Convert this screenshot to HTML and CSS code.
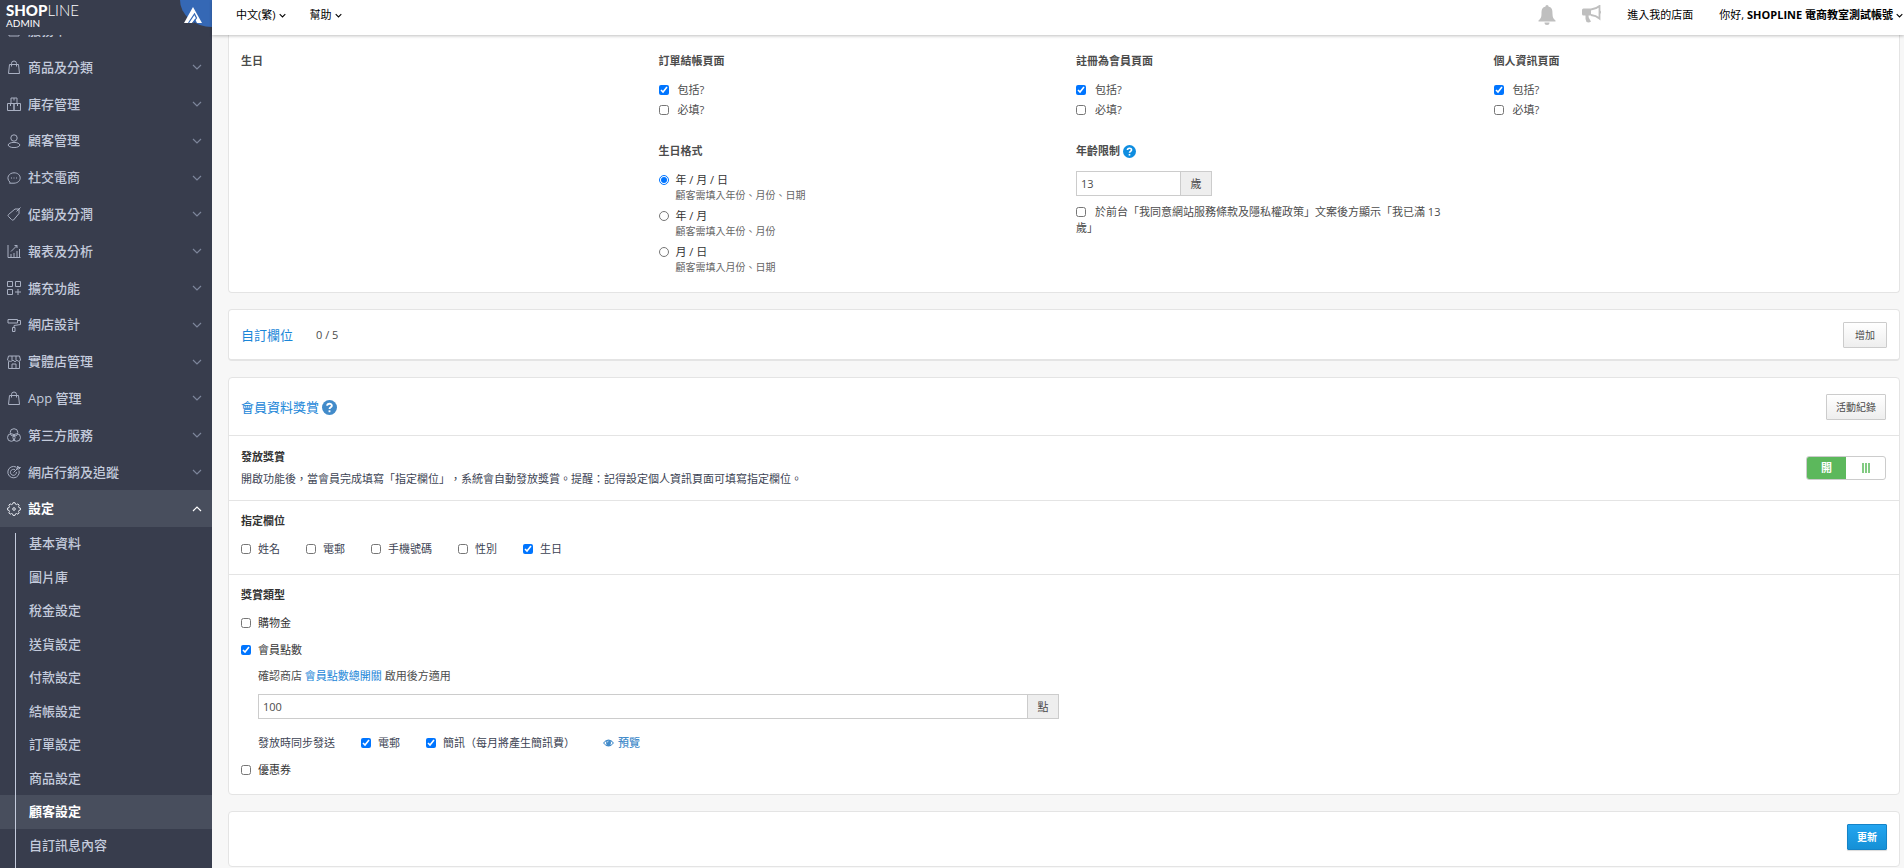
FILE: index.html
```html
<!DOCTYPE html>
<html lang="zh-Hant">
<head>
<meta charset="utf-8">
<title>SHOPLINE Admin</title>
<link rel="stylesheet" href="styles.css">
</head>
<body>
<svg class="sprite" aria-hidden="true">
  <symbol id="down" viewBox="0 0 10 6"><path d="M1 1l4 4 4-4"/></symbol>
  <symbol id="bag" viewBox="0 0 14 14"><path d="M2.500 4.500h9l1 9h-11zM4.500 6.500V3.500a2.500 2.500 0 0 1 5 0v3"/></symbol>
  <symbol id="help" viewBox="0 0 16 16"><circle cx="8" cy="8" r="8" fill="currentColor" stroke="none"/><path d="M5.500 6.200C5.500 3.200 10.500 3.200 10.500 6.100C10.500 7.800 8 7.800 8 9.600" stroke="#fff" stroke-width="2"/><path d="M8 11v2" stroke="#fff" stroke-width="2"/></symbol>
</svg>
<div class="app">
  <aside class="sidebar">
    <div class="brand">
      <a class="logo" href="#"><span class="logo-name"><b>SHOP</b>LINE</span><span class="logo-sub">ADMIN</span></a>
      <svg class="corner" viewBox="0 0 32 27"><path d="M0 0A32 27 0 0 0 32 27V0z" fill="#3568b5"/><path d="M4 23L13 7l9 16h-5l-2-4-3 4zM11.500 17.500l1.500-4" fill="#fff" stroke="none"/><path d="M8.500 23l6-9 2 4-3.500 5" fill="none" stroke="#3568b5" stroke-width="1.200"/></svg>
    </div>
    <nav class="nav">
      <ul class="menu">
        <li><a href="#"><svg class="ico" viewBox="0 0 14 14"><path d="M2 1h10v12H2z"/></svg>服務單</a></li>
        <li><a href="#"><svg class="ico"><use href="#bag"/></svg>商品及分類<svg class="chev"><use href="#down"/></svg></a></li>
        <li><a href="#"><svg class="ico" viewBox="0 0 14 14"><path d="M4 1h6v5.500H4zM.5 6.500H7v7H.5zM7 6.500h6.500v7H7zM7 1v2.500M3.500 6.500V9M10.500 6.500V9"/></svg>庫存管理<svg class="chev"><use href="#down"/></svg></a></li>
        <li><a href="#"><svg class="ico" viewBox="0 0 14 14"><circle cx="7" cy="4" r="3.200"/><ellipse cx="7" cy="11" rx="5.800" ry="2.600"/></svg>顧客管理<svg class="chev"><use href="#down"/></svg></a></li>
        <li><a href="#"><svg class="ico" viewBox="0 0 14 14"><path d="M3 11.200C-1.500 7 2 1.800 7 1.800c8 0 8.500 10 0 10.400H2.500zM4 7h1M6.500 7h1M9 7h1"/></svg>社交電商<svg class="chev"><use href="#down"/></svg></a></li>
        <li><a href="#"><svg class="ico" viewBox="0 0 14 14"><path d="M8 2h4v4.500L6.500 13Q5.500 13.500 4.500 12.500L1.500 9.500Q.5 8.500 1.500 7.500zM9.500 4.500l4-4"/></svg>促銷及分潤<svg class="chev"><use href="#down"/></svg></a></li>
        <li><a href="#"><svg class="ico" viewBox="0 0 14 14"><path d="M1 1v12.500h12.500M4 13v-3M7 13V9M10 13V7M12.500 13V5M4 7.500l6-6M7.500 1.500H10V4"/></svg>報表及分析<svg class="chev"><use href="#down"/></svg></a></li>
        <li><a href="#"><svg class="ico" viewBox="0 0 14 14"><path d="M.5.5h5v5h-5zM8.500.5h5v5h-5zM.5 8.500h5v5h-5zM11 8v6M8 11h6"/></svg>擴充功能<svg class="chev"><use href="#down"/></svg></a></li>
        <li><a href="#"><svg class="ico" viewBox="0 0 14 14"><path d="M1 1.500h9.500v3.500H1zM10.500 2.500h3v4L7 7.500v2M5.500 9.500h2.500v4H5.500z"/></svg>網店設計<svg class="chev"><use href="#down"/></svg></a></li>
        <li><a href="#"><svg class="ico" viewBox="0 0 14 14"><path d="M1.500 1h11l1 4c-1 2-3 1.500-3.500 0-1 2-3 2-4 0-.5 1.500-4.500 2-5.500 0zM1.500 6.500v7h11v-7M5 13.500V9h4v4.500M5 1v4M9 1v4"/></svg>實體店管理<svg class="chev"><use href="#down"/></svg></a></li>
        <li><a href="#"><svg class="ico"><use href="#bag"/></svg>App 管理<svg class="chev"><use href="#down"/></svg></a></li>
        <li><a href="#"><svg class="ico" viewBox="0 0 14 14"><circle cx="7" cy="4.500" r="3.800"/><circle cx="4.300" cy="9.500" r="3.800"/><circle cx="9.700" cy="9.500" r="3.800"/></svg>第三方服務<svg class="chev"><use href="#down"/></svg></a></li>
        <li><a href="#"><svg class="ico" viewBox="0 0 14 14"><path d="M9 2A5.700 5.700 0 1 0 12 5.500M8 4.800A3 3 0 1 0 9.400 7M6.500 7.500L11 3V1l-1 1v2h2l1.500-1.500H11"/></svg>網店行銷及追蹤<svg class="chev"><use href="#down"/></svg></a></li>
        <li><a class="active" href="#"><svg class="ico" viewBox="0 0 14 14"><path d="M5.500 2.200L6 .7h2l.5 1.500 1 .4 1.400-.7 1.300 1.300-.7 1.400.4 1 1.500.4v2l-1.500.5-.4 1 .7 1.400-1.300 1.300-1.400-.7-1 .4L8 13.400H6l-.5-1.500-1-.4-1.400.7-1.300-1.300.7-1.400-.4-1L.6 8V6l1.500-.4.4-1-.7-1.400 1.300-1.300 1.400.7z"/><circle cx="7" cy="7" r="1.300"/></svg>設定<svg class="chev up"><use href="#down"/></svg></a></li>
      </ul>
      <ul class="submenu">
        <li><a href="#">基本資料</a></li>
        <li><a href="#">圖片庫</a></li>
        <li><a href="#">稅金設定</a></li>
        <li><a href="#">送貨設定</a></li>
        <li><a href="#">付款設定</a></li>
        <li><a href="#">結帳設定</a></li>
        <li><a href="#">訂單設定</a></li>
        <li><a href="#">商品設定</a></li>
        <li><a class="current" href="#">顧客設定</a></li>
        <li><a href="#">自訂訊息內容</a></li>
      </ul>
    </nav>
  </aside>
  <div class="page">
    <header class="topbar">
      <button class="drop" type="button">中文(繁)<svg><use href="#down"/></svg></button>
      <button class="drop" type="button">幫助<svg><use href="#down"/></svg></button>
      <div class="top-right">
        <button class="icon-btn" type="button" aria-label="通知"><svg viewBox="0 0 20 20"><path d="M10 0a2 2 0 0 1 1.700 1.800C15 2.500 15.500 5 15.500 9c0 3.500 1 5 3 6.500v1H1.500v-1c2-1.500 3-3 3-6.500 0-4 .5-6.500 3.800-7.200A2 2 0 0 1 10 0zM7.500 17.500h5a2.500 2.500 0 0 1-5 0z" fill="#bfbfbf"/></svg></button>
        <button class="icon-btn" type="button" aria-label="公告"><svg viewBox="0 0 20 20"><path d="M0 5q0-1.500 1.500-1.500H9v7H6.500q0 2 1 3.500t1.500 2.500q-2 1.500-4.500.5Q3 13.500 3.500 10.500h-2Q0 10.500 0 9z" fill="#bfbfbf"/><path d="M9 4.500q5-.5 8.500-3.500v12.500Q14 10.500 9 10" fill="none" stroke="#bfbfbf" stroke-width="1.800"/><path d="M18 5.500q2 1.500 0 3.500z" fill="#bfbfbf"/></svg></button>
        <a class="store" href="#">進入我的店面</a>
        <button class="drop user" type="button"><span>你好, <b>SHOPLINE 電商教室測試帳號</b></span><svg><use href="#down"/></svg></button>
      </div>
    </header>
    <main class="content">
      <section class="card birthday">
        <div><h3>生日</h3></div>
        <div>
          <h3>訂單結帳頁面</h3>
          <div class="checks">
            <label><input type="checkbox" checked>包括?</label>
            <label><input type="checkbox">必填?</label>
          </div>
          <h3 class="second">生日格式</h3>
          <div class="radios">
            <label><input type="radio" name="format" checked><span>年 / 月 / 日<small>顧客需填入年份、月份、日期</small></span></label>
            <label><input type="radio" name="format"><span>年 / 月<small>顧客需填入年份、月份</small></span></label>
            <label><input type="radio" name="format"><span>月 / 日<small>顧客需填入月份、日期</small></span></label>
          </div>
        </div>
        <div>
          <h3>註冊為會員頁面</h3>
          <div class="checks">
            <label><input type="checkbox" checked>包括?</label>
            <label><input type="checkbox">必填?</label>
          </div>
          <h3 class="second">年齡限制 <svg class="help"><use href="#help"/></svg></h3>
          <div class="group age"><input type="text" value="13" aria-label="年齡限制"><span>歲</span></div>
          <label class="consent"><input type="checkbox">於前台「我同意網站服務條款及隱私權政策」文案後方顯示「我已滿 13 歲」</label>
        </div>
        <div>
          <h3>個人資訊頁面</h3>
          <div class="checks">
            <label><input type="checkbox" checked>包括?</label>
            <label><input type="checkbox">必填?</label>
          </div>
        </div>
      </section>

      <section class="card custom">
        <h2>自訂欄位</h2><span class="count">0 / 5</span>
        <button class="btn" type="button">增加</button>
      </section>

      <section class="card reward">
        <div class="row reward-head">
          <h2>會員資料獎賞 <svg class="help large"><use href="#help"/></svg></h2>
          <button class="btn" type="button">活動紀錄</button>
        </div>
        <div class="row grant">
          <div>
            <h4>發放獎賞</h4>
            <p>開啟功能後，當會員完成填寫「指定欄位」，系統會自動發放獎賞。提醒：記得設定個人資訊頁面可填寫指定欄位。</p>
          </div>
          <button class="switch" type="button" role="switch" aria-checked="true"><span class="on">開</span><span class="grip"><i></i><i></i><i></i></span></button>
        </div>
        <div class="row fields">
          <h4>指定欄位</h4>
          <div class="inline">
            <label><input type="checkbox">姓名</label>
            <label><input type="checkbox">電郵</label>
            <label><input type="checkbox">手機號碼</label>
            <label><input type="checkbox">性別</label>
            <label><input type="checkbox" checked>生日</label>
          </div>
        </div>
        <div class="row types">
          <h4>獎賞類型</h4>
          <label class="type"><input type="checkbox">購物金</label>
          <label class="type"><input type="checkbox" checked>會員點數</label>
          <div class="points">
            <p>確認商店 <a href="#">會員點數總開關</a> 啟用後方適用</p>
            <div class="group amount"><input type="text" value="100" aria-label="會員點數"><span>點</span></div>
            <div class="inline">
              <span>發放時同步發送</span>
              <label><input type="checkbox" checked>電郵</label>
              <label><input type="checkbox" checked>簡訊（每月將產生簡訊費）</label>
              <a class="preview" href="#"><svg viewBox="0 0 12 8"><path d="M0 4Q6-3.500 12 4Q6 11.500 0 4z" fill="#428bca"/><path d="M1.300 4Q2.300 2.600 3.600 2Q2.600 4.500 4 6.200Q2.300 5.500 1.300 4zM10.700 4Q9.700 2.600 8.400 2Q9.400 4.500 8 6.200Q9.700 5.500 10.700 4z" fill="#fff"/><path d="M4.500 3.500Q4.700 2 6 1.900" fill="none" stroke="#fff" stroke-width=".7"/></svg>預覽</a>
            </div>
          </div>
          <label class="type"><input type="checkbox">優惠券</label>
        </div>
      </section>

      <section class="card submit"><button class="btn primary" type="submit">更新</button></section>
    </main>
  </div>
</div>
</body>
</html>
```
FILE: styles.css
```css
* { box-sizing: border-box; }
body {
  margin: 0;
  background: #f7f7f7;
  color: #4c4c4c;
  font: 11px/16px "Open Sans", "Noto Sans CJK TC", sans-serif;
  text-spacing-trim: space-all;
}
h2, h3, h4, p, ul { margin: 0; padding: 0; }
ul { list-style: none; }
a { color: #1a86d8; text-decoration: none; }
button, input { font: inherit; color: inherit; }
svg { fill: none; stroke: currentColor; flex: none; }
.sprite { display: none; }
input[type="checkbox"], input[type="radio"] {
  width: 10px;
  height: 10px;
  margin: 0;
  flex: none;
}
.app { display: flex; height: 100vh; overflow: hidden; }

.sidebar {
  width: 212px;
  flex: none;
  display: flex;
  flex-direction: column;
  background: #383d4d;
  color: #c4cbdc;
  font-size: 13px;
  font-weight: 500;
}
.brand { display: flex; justify-content: space-between; height: 35px; flex: none; }
.logo { display: flex; flex-direction: column; padding: 2px 0 0 6px; color: #fff; font-family: Lato, sans-serif; }
.logo-name { font-size: 15px; line-height: 16px; font-weight: 300; }
.logo-name b { font-weight: 900; }
.logo-sub { font-size: 10px; line-height: 10px; font-weight: 400; }
.corner { width: 32px; height: 27px; stroke: none; }
.nav { flex: 1; min-height: 0; overflow: hidden; }
.menu { margin-top: -23px; }
.menu a {
  display: flex;
  align-items: center;
  gap: 7px;
  padding: 8px 10px 8px 7px;
  line-height: 1.6;
  color: inherit;
}
.ico { width: 14px; height: 14px; color: #a9b0c2; }
.chev { width: 10px; height: 6px; margin-left: auto; color: #7d869b; stroke-width: 1.2; }
.menu .up { transform: rotate(180deg); color: #fff; }
.menu .active, .submenu .current { background: #484e5d; color: #fff; font-weight: 700; }
.active .ico { color: #e4e7ee; }
.submenu { position: relative; }
.submenu::before {
  content: "";
  position: absolute;
  left: 15px;
  top: 6px;
  bottom: -16px;
  width: 1px;
  background: #c4cbdc;
}
.submenu a { display: block; padding: 7px 0 7px 29px; line-height: 1.5; color: inherit; }

.page { flex: 1; min-width: 0; display: flex; flex-direction: column; }
.topbar {
  position: relative;
  flex: none;
  display: flex;
  align-items: center;
  gap: 24px;
  height: 35px;
  padding: 0 1px 5px 24px;
  background: #fff;
  color: #000;
  box-shadow: 0 1px 3px rgba(0, 0, 0, .25);
}
.drop { display: flex; align-items: center; gap: 3px; padding: 0; border: 0; background: none; }
.drop svg { width: 7px; height: 5px; stroke-width: 1.5; }
.top-right { display: flex; align-items: center; margin-left: auto; }
.icon-btn { padding: 0; margin-right: 25px; border: 0; background: none; height: 20px; }
.icon-btn svg { width: 20px; height: 20px; stroke: none; display: block; }
.store { color: inherit; margin-right: 26px; }

.content { padding: 0 4px 0 16px; display: flex; flex-direction: column; gap: 16px; }
.card { background: #fff; border: 1px solid #e4e4e4; border-radius: 4px; }
h2 { font-size: 13px; line-height: 20px; font-weight: 400; color: #1a86d8; }
h3, h4 { font-size: 11px; line-height: 16px; font-weight: 700; }
h4 { color: #333; }
.help { width: 13px; height: 13px; color: #0e8de0; vertical-align: -3px; }
.large { width: 15px; height: 15px; color: #428bca; }

.birthday {
  display: grid;
  grid-template-columns: repeat(4, 1fr);
  padding: 18px 0;
  border-top: 0;
  border-radius: 0 0 4px 4px;
}
.birthday > div { padding: 0 12px; }
.checks { display: grid; gap: 4px; margin-top: 13px; }
.checks label { display: flex; align-items: center; gap: 9px; }
.second { margin-top: 25px; }
.radios { display: grid; gap: 6px; margin-top: 13px; color: #333; }
.radios label { display: flex; align-items: flex-start; gap: 7px; }
.radios input { margin-top: 3px; }
.radios small { display: block; font-size: 10px; line-height: 14px; color: #666; }

.group { display: flex; height: 25px; border: 1px solid #ccc; }
.group input { flex: 1; min-width: 0; border: 0; padding: 0 4px; background: #fff; }
.group span { display: grid; place-items: center; width: 31px; border-left: 1px solid #ccc; background: #eee; }
.age { width: 136px; margin-top: 12px; }
.consent { display: block; margin-top: 8px; padding-right: 16px; }
.consent input { margin-right: 9px; vertical-align: -1px; }

.btn {
  height: 26px;
  padding: 0 11px;
  border: 1px solid #ccc;
  border-radius: 1px;
  background: linear-gradient(#fff, #eee);
  font-size: 10px;
  line-height: 20px;
}
.custom { display: flex; align-items: center; padding: 12px 12px 11px; border-bottom-width: 2px; }
.count { margin-left: 23px; }
.custom .btn, .reward-head .btn { margin-left: auto; }

.row { padding: 12px 13px 12px 12px; border-top: 1px solid #e4e4e4; }
.row.reward-head { display: flex; align-items: center; padding: 16px 13px 15px 12px; border-top: 0; }
.reward-head .btn { padding: 0 9px; }
.grant { display: flex; align-items: center; justify-content: space-between; color: #3c4353; }
.grant h4 { line-height: 18px; }
.grant p { line-height: 18px; margin-top: 4px; }
.switch {
  display: flex;
  width: 80px;
  height: 24px;
  padding: 0;
  border: 1px solid #ccc;
  border-radius: 3px;
  background: #fff;
  overflow: hidden;
}
.switch > span { flex: 1; height: 100%; display: flex; align-items: center; justify-content: center; gap: 1px; }
.on { background: #5cb85c; color: #fff; font-weight: 700; }
.grip i { width: 2px; height: 10px; background: #82cb82; }
.inline { display: flex; gap: 26px; color: #3c4353; }
.inline label, .type { display: flex; align-items: center; gap: 7px; }
.fields .inline { margin-top: 12px; padding-bottom: 5px; }
.types { padding-bottom: 16px; }
.type { color: #333; margin-top: 11px; }
h4 + .type { margin-top: 12px; }
.points { padding-left: 17px; margin-top: 10px; }
.amount { width: calc(50% - 13px); margin: 10px 0 16px; }
.preview { display: flex; align-items: center; gap: 4px; margin-left: 2px; color: #428bca; font-weight: 500; }
.preview svg { width: 11px; height: 8px; stroke: none; }

.submit { display: flex; justify-content: flex-end; align-items: center; padding: 12px 12px 16px; }
.primary {
  border-color: #1583c7;
  background: linear-gradient(#23a5f0, #1590d6);
  color: #fff;
  font-weight: 700;
  padding: 0 9px;
  box-shadow: 0 1px 1px rgba(0, 0, 0, .15);
}
```
